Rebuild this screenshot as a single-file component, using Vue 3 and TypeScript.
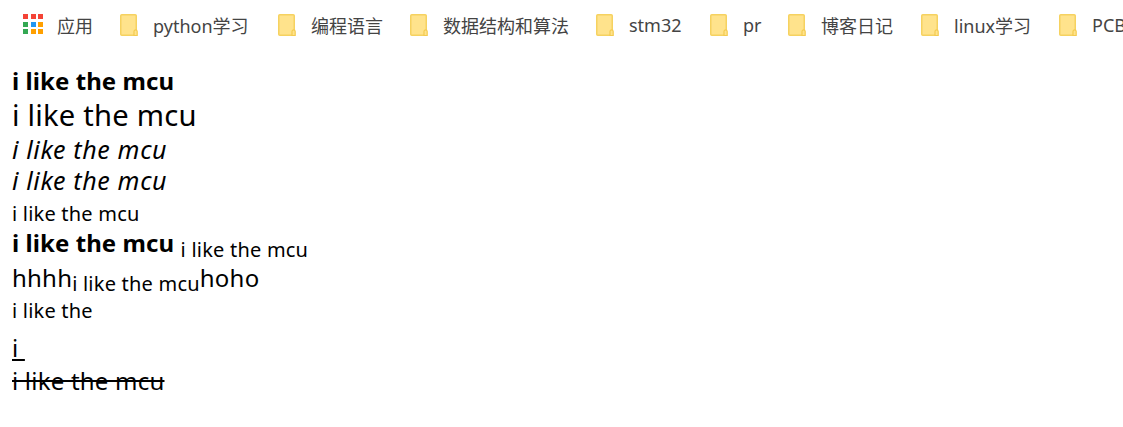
<script setup lang="ts">
interface Bookmark { label: string; width: number }
const bookmarks: Bookmark[] = [
  { label: 'python学习', width: 97 },
  { label: '编程语言', width: 71 },
  { label: '数据结构和算法', width: 125 },
  { label: 'stm32', width: 53 },
  { label: 'pr', width: 17 },
  { label: '博客日记', width: 72 },
  { label: 'linux学习', width: 77 },
  { label: 'PCB', width: 40 },
]
const dots = ['#f44336', '#f44336', '#f44336', '#34a853', '#2196f3', '#ffa000', '#34a853', '#ffa000', '#ffa000']
</script>

<template>
  <div class="page">
    <nav class="bar">
      <div class="apps">
        <span class="grid"><i v-for="(c, i) in dots" :key="i" class="dot" :style="{ background: c }"></i></span>
        <span class="label">应用</span>
      </div>
      <div v-for="b in bookmarks" :key="b.label" class="mark">
        <svg class="folder" width="18" height="22" viewBox="0 0 18 22">
          <rect x="0.75" y="0.75" width="15.5" height="20.5" rx="1" fill="#ffe38c" stroke="#f6d260" stroke-width="1.5"/>
          <path d="M14 21.5v-4a1.6 1.6 0 0 1 3.2 0v4z" fill="#ffe38c" stroke="#f4cb50" stroke-width="1.2"/>
        </svg>
        <span class="label" :style="{ width: b.width + 'px' }">{{ b.label }}</span>
      </div>
    </nav>
    <main class="doc">
      <div class="l1"><b>i like the mcu</b></div>
      <div class="l2">i like the mcu</div>
      <div class="l3"><i>i like the mcu</i></div>
      <div class="l4"><i>i like the mcu</i></div>
      <div class="l5">i like the mcu</div>
      <div class="l6"><b>i like the mcu</b> <sub>i like the mcu</sub></div>
      <div class="l7">hhhh<sub>i like the mcu</sub>hoho</div>
      <div class="l8">i like the</div>
      <div class="l9"><u>i&nbsp;</u></div>
      <div class="l10"><s>i like the mcu</s></div>
    </main>
  </div>
</template>

<style>
html, body { margin: 0; background: #fff; }
</style>

<style scoped>
.page {
  width: 1123px;
  height: 427px;
  overflow: hidden;
  font-family: "Noto Sans", "Noto Sans CJK SC", sans-serif;
  color: #000;
}
.bar {
  display: flex;
  align-items: center;
  height: 52px;
  padding-left: 23px;
  white-space: nowrap;
  color: #444;
  font-size: 18px;
}
.apps { display: flex; align-items: center; gap: 14px; margin-right: 27px; }
.grid { display: grid; grid-template-columns: repeat(3, 5px); gap: 2.5px; margin-bottom: 4px; }
.dot { width: 5px; height: 5px; }
.mark { display: flex; align-items: center; gap: 15px; margin-right: 28px; flex: none; }
.folder { flex: none; margin-bottom: 2px; }
.label { display: inline-block; margin-bottom: 2px; }
.doc { padding-left: 12px; padding-top: 12px; letter-spacing: 0.0135em; }
.doc > div { white-space: nowrap; }
.doc b { letter-spacing: 0.07px; }
.doc i { letter-spacing: 0.65px; }
.l1 { font-size: 24px; line-height: 34px; }
.l2 { font-size: 29.2px; line-height: 34px; margin-bottom: 0; }
.l3 { font-size: 25px; line-height: 34px; }
.l4 { font-size: 25px; line-height: 28px; }
.l5 { font-size: 20px; line-height: 34px; margin-top: 3px; margin-bottom: -3px; }
.l6 { font-size: 24px; line-height: 30px; }
.l6 sub { font-size: 20px; vertical-align: -5px; line-height: 0; }
.l7 { font-size: 24px; line-height: 38px; margin-top: 1px; }
.l7 sub { font-size: 20px; vertical-align: -4px; line-height: 0; }
.l8 { font-size: 20px; line-height: 28px; }
.l9 { font-size: 24px; line-height: 46px; }
.l10 { font-size: 24px; line-height: 20px; }
</style>
